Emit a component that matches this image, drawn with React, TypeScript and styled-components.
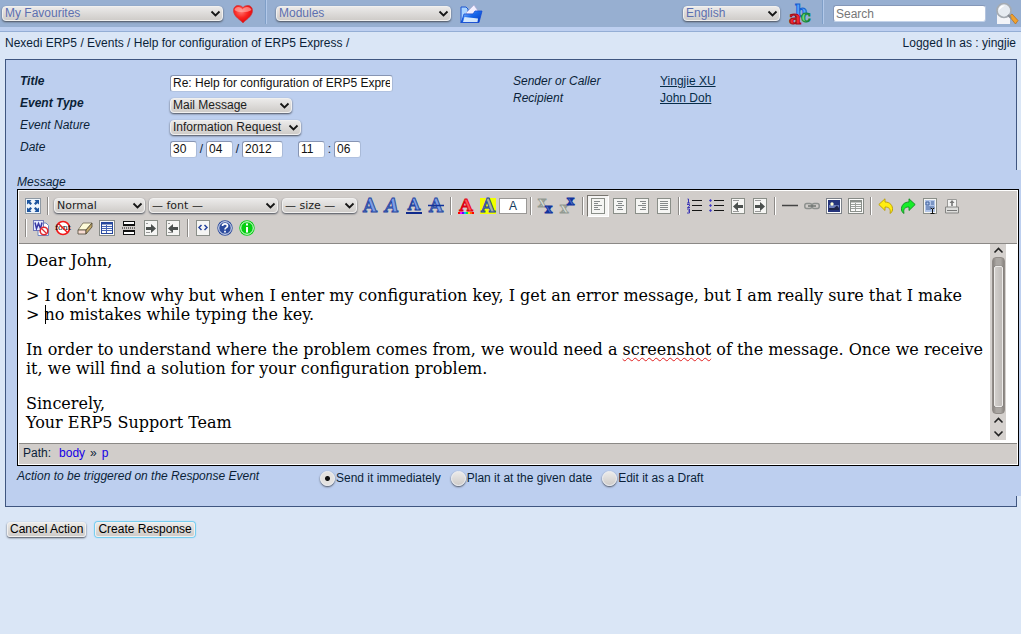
import React from 'react';
import styled, { createGlobalStyle, css } from 'styled-components';

const GlobalStyle = createGlobalStyle`
  *, *::before, *::after { box-sizing: border-box; }
  body {
    margin: 0;
    background: #dae6f6;
    color: #0b1f38;
    font: 12px/16px 'Liberation Sans', Arial, sans-serif;
    overflow-x: hidden;
  }
  p { margin: 0; }
  svg { display: block; flex: none; overflow: visible; }
`;

const raised = css`
  background: linear-gradient(#ebeae9, #cfccc9);
  border: 1px solid #f1f0ef;
  box-shadow: 0 1px 2px #4a4f5a;
`;

/* ---------- header ---------- */
const Header = styled.header`
  display: flex;
  align-items: center;
  height: 32px;
  padding: 0 2px 5px;
  background: linear-gradient(#97afd1 27px, #bdcff0 27px, #bdcff0 31px, #94aed5 31px);
`;
const Spacer = styled.div`flex: 1;`;
const HeaderLine = styled.span`
  width: 2px;
  height: 24px;
  margin: 0 9px 3px 11px;
  background: #b3c9ea;
  border-left: 1px solid #7f9fc8;
`;
const IconButton = styled.button`
  display: flex;
  padding: 0;
  margin-left: 9px;
  border: 0;
  background: none;
`;
const SearchInput = styled.input`
  width: 153px;
  height: 17px;
  padding: 0 2px;
  border: 1px solid #8497b8;
  border-right-color: #b4c4de;
  border-bottom-color: #c4d3ea;
  border-radius: 3px;
  font: 12px 'Liberation Sans', Arial, sans-serif;
  &::placeholder { color: #777; opacity: 1; }
`;

/* ---------- select ---------- */
const SelectBox = styled.span`
  position: relative;
  display: inline-flex;
  justify-self: start;
`;
const NativeSelect = styled.select<{ $width: number; $small?: boolean; $tint?: boolean }>`
  ${raised}
  appearance: none;
  width: ${p => p.$width}px;
  height: 15px;
  padding: 0 2px;
  border-radius: 4px;
  color: ${p => (p.$tint ? '#5d70b0' : '#1c1c1c')};
  font: ${p => (p.$small ? "11px/13px 'DejaVu Sans'" : "12px/13px 'Liberation Sans', Arial")}, sans-serif;
`;
const Arrow = styled.svg`
  position: absolute;
  top: 4px;
  right: 3px;
  pointer-events: none;
`;

type SelectProps = { label: string; options: string[]; width: number; small?: boolean; tint?: boolean; id?: string };
const Select = ({ label, options, width, small, tint, id }: SelectProps) => (
  <SelectBox>
    <NativeSelect id={id} aria-label={label} $width={width} $small={small} $tint={tint}>
      {options.map(o => <option key={o}>{o}</option>)}
    </NativeSelect>
    <Arrow width="9" height="8" viewBox="0 0 9 8">
      <path d="M.5 1.500l4 4l4-4" fill="none" stroke="#151515" strokeWidth="1.800" />
    </Arrow>
  </SelectBox>
);

/* ---------- page ---------- */
const Crumbs = styled.nav`
  display: flex;
  justify-content: space-between;
  padding: 3px 5px 8px;
  a { color: inherit; text-decoration: none; }
`;
const Panel = styled.section`
  margin: 0 4px 0 5px;
  padding-bottom: 10px;
  border: 1px solid #3f5680;
  background: #bdcfef;
`;
const Fields = styled.div`
  display: grid;
  grid-template-columns: 1fr 1fr;
  padding: 12px 0 10px;
`;
const Column = styled.div`padding-left: 14px;`;
const InfoColumn = styled.div`padding: 1px 0 0 2px;`;
const Row = styled.div`
  display: grid;
  grid-template-columns: 150px 1fr;
  align-items: center;
  height: 22px;
`;
const InfoRow = styled.div`
  display: grid;
  grid-template-columns: 147px 1fr;
  height: 17px;
  a { color: #062c48; text-decoration: underline; }
`;
const Label = styled.label<{ $strong?: boolean }>`
  padding-bottom: 5px;
  font-style: italic;
  font-weight: ${p => (p.$strong ? 'bold' : 'normal')};
`;
const Caption = styled.span`font-style: italic;`;
const TextInput = styled.input<{ $width: number }>`
  width: ${p => p.$width}px;
  height: 17px;
  padding: 0 2px;
  border: 1px solid #8795b3;
  border-right-color: #a9bad8;
  border-bottom-color: #b1c2e0;
  border-radius: 3px;
  background: #fff;
  color: #111;
  font: 12px 'Liberation Sans', Arial, sans-serif;
`;
const DateFields = styled.div`display: flex; align-items: center;`;
const Mark = styled.span<{ $width?: number }>`
  width: ${p => p.$width ?? 9}px;
  text-align: center;
`;

/* ---------- editor ---------- */
const Wide = styled.div`
  margin-right: -5px;
  padding: 4px 2px 10px 11px;
  background: #bdcfef;
`;
const MessageLabel = styled.div`
  height: 15px;
  font-style: italic;
`;
const Editor = styled.div`
  border: 1px solid #000;
  background: #fff;
`;
const Toolbar = styled.div`
  padding: 4px 3px;
  margin: 1px 1px 0;
  border-bottom: 1px solid #8b8986;
  background: #d1cdca;
`;
const ToolRow = styled.div`
  display: flex;
  align-items: center;
  height: 22px;
`;
const Tool = styled.button<{ $pressed?: boolean }>`
  display: flex;
  align-items: center;
  justify-content: center;
  width: 22px;
  height: 22px;
  padding: 0;
  border: 1px solid transparent;
  background: none;
  ${p => p.$pressed && css`
    background: #f6f5f4;
    border-color: #77746f #fff #fff #77746f;
  `}
`;
const FontSample = styled.button`
  width: 28px;
  height: 16px;
  padding: 0;
  border: 1px solid #9a9896;
  background: #fff;
  color: #143a5c;
  font: 12px/13px 'Liberation Sans', Arial, sans-serif;
`;
const Divider = styled.span`
  width: 2px;
  height: 18px;
  margin: 0 3px;
  border-left: 1px solid #8d8a87;
  background: #fff;
`;
const ToolSelects = styled.div`display: flex; gap: 4px; padding: 0 2px 1px;`;
const Sheet = styled.div`
  display: flex;
  align-items: flex-start;
  padding: 0 12px 3px 0;
`;
const Body = styled.div`
  flex: 1;
  padding: 7px 4px 0 8px;
  color: #000;
  font: 16px/19px 'DejaVu Serif', serif;
  outline: 0;
  p + p { margin-top: 16px; }
`;
const Misspelt = styled.span`
  text-decoration: underline wavy #e02020 1px;
  text-underline-offset: 2px;
  text-decoration-skip-ink: none;
`;
const CaretHost = styled.span`position: relative;`;
const Caret = styled.span`
  position: absolute;
  left: 0;
  top: 0;
  width: 1px;
  height: 19px;
  background: #000;
`;
const Scrollbar = styled.div`
  display: flex;
  flex-direction: column;
  align-items: center;
  align-self: stretch;
  width: 16px;
  min-height: 196px;
  background: #d5d1ce;
`;
const ScrollButton = styled.button`
  display: flex;
  align-items: center;
  justify-content: center;
  width: 16px;
  height: 13px;
  padding: 0;
  border: 0;
  background: none;
`;
const Track = styled.div`
  flex: 1;
  width: 13px;
  padding: 8px 1px 6px;
  border: 1px solid #918c88;
  border-radius: 4px;
  background: linear-gradient(90deg, #8a8581, #aaa6a2 30%, #aaa6a2 70%, #8a8581);
`;
const Thumb = styled.div`
  height: 100%;
  border: 1px solid #eeecea;
  border-radius: 2px;
  background: linear-gradient(90deg, #d2cfcc, #bfbbb8);
  box-shadow: 0 0 1px #444;
`;
const PathBar = styled.div`
  display: flex;
  gap: 5px;
  height: 21px;
  margin: 0 1px 1px;
  padding: 1px 4px;
  border-top: 1px solid #8b8986;
  background: #d1cdca;
  a { color: #1400e6; text-decoration: none; }
`;
const PathLabel = styled.span`margin-right: 3px;`;
const Actions = styled.fieldset`
  display: grid;
  grid-template-columns: 303px 1fr;
  margin: 0;
  padding: 2px 0 0;
  border: 0;
`;
const Choices = styled.div`
  display: flex;
  gap: 10px;
  padding-top: 2px;
`;
const Choice = styled.label`
  display: flex;
  gap: 1px;
`;
const Radio = styled.input`
  ${raised}
  appearance: none;
  width: 15px;
  height: 15px;
  margin: 1px 0 0;
  border-radius: 50%;
  &:checked { background: radial-gradient(circle, #111 2px, #e4e2e0 3px); }
`;
const Footer = styled.footer`
  display: flex;
  gap: 9px;
  padding: 15px 7px;
`;
const PushButton = styled.button<{ $focus?: boolean }>`
  ${raised}
  height: 15px;
  padding: 0 2px;
  border-radius: 3px;
  color: #000;
  font: 12px/13px 'Liberation Sans', Arial, sans-serif;
  ${p => p.$focus && css`box-shadow: 0 0 1px 1px #6ccbf0;`}
`;

/* ---------- drawings ---------- */
const Svg = ({ children, w = 16, h = 16 }: { children: React.ReactNode; w?: number; h?: number }) => (
  <svg width={w} height={h} viewBox={`0 0 ${w} ${h}`}>{children}</svg>
);
const serif = "'DejaVu Serif', serif";
const Letter = ({ fill = '#7d9fe6', stroke = '#24449f', slant, y = 14, size = 18 }: { fill?: string; stroke?: string; slant?: boolean; y?: number; size?: number }) => (
  <text x="8" y={y} textAnchor="middle" fontFamily={serif} fontWeight="bold" fontStyle={slant ? 'italic' : 'normal'}
    fontSize={size} fill={fill} stroke={stroke} strokeWidth=".9">A</text>
);
const Sheet16 = ({ children }: { children?: React.ReactNode }) => (
  <Svg><rect x="1.500" y=".5" width="13" height="15" fill="#f5f5f3" stroke="#8a8e88" />{children}</Svg>
);
const Lines = ({ spans }: { spans: [number, number][] }) => (
  <path d={spans.map(([a, b], i) => `M${a} ${3.5 + i * 2}H${b}`).join('')} stroke="#85898a" fill="none" />
);

const Heart = () => (
  <Svg w={22} h={20}>
    <defs><radialGradient id="heart" cx=".4" cy=".35" r=".7"><stop offset="0" stopColor="#ff7770" /><stop offset=".5" stopColor="#fa2420" /><stop offset="1" stopColor="#d90008" /></radialGradient></defs>
    <path d="M11 19C9 16 1.500 13 1.500 6.500C1.500 3.500 3.500 1.500 6 1.500C8.500 1.500 10.300 2.500 11 3.500C11.700 2.500 13.500 1.500 16 1.500C18.500 1.500 20.500 3.500 20.500 6.500C20.500 13 13 16 11 19Z" fill="url(#heart)" stroke="#c8383c" strokeWidth=".7" />
    <path d="M2.500 6C3 2 9 2 10.500 5.500C12 2 18.500 2 19.500 6C15 9 6 9 2.500 6Z" fill="#ffb9b4" opacity=".6" />
  </Svg>
);
const Folder = () => (
  <Svg w={23} h={20}>
    <defs><linearGradient id="folder" x2="1" y2="1"><stop stopColor="#b8dcff" /><stop offset=".45" stopColor="#1768ec" /><stop offset="1" stopColor="#0836bd" /></linearGradient></defs>
    <path d="M1 19V3H6L8 5V9L4 12Z" fill="#a9d3ff" stroke="#1a55cf" />
    <path d="M6 9L14 1L18 7L17 10H7Z" fill="#f3efff" stroke="#a8a5d0" strokeWidth=".6" />
    <path d="M4 10H13L15 7H22L19 18.500H1.500Z" fill="url(#folder)" stroke="#1149d2" strokeWidth=".8" />
    <path d="M4.500 13L18 14.500L17.500 18H3Z" fill="#e7f5ff" opacity=".9" />
  </Svg>
);
const Abc = () => (
  <Svg w={22} h={22}>
    <g fontFamily={serif} fontWeight="bold">
      <text x="6" y="14" fontSize="17" fill="#58a5ff" stroke="#1660cf" strokeWidth="1">b</text>
      <text x="0" y="21" fontSize="19" fill="#f32a32" stroke="#a90d18" strokeWidth="1">a</text>
      <text x="12" y="19" fontSize="16" fill="#6edc78" stroke="#14863a" strokeWidth="1">c</text>
    </g>
  </Svg>
);
const SearchIcon = () => (
  <Svg w={24} h={23}>
    <path d="M2 8H15V22H2Z" fill="#f3f4f8" />
    <path d="M14 14L17 12L23 18.500L20.500 22Z" fill="#f0a12c" stroke="#b86a14" strokeWidth=".7" />
    <circle cx="9" cy="8.500" r="7" fill="#e6ebf1" stroke="#a5abb2" strokeWidth="1.700" />
    <path d="M4 8C4 4 7 3 10 3.500C8 5 6 6 4 8Z" fill="#fff" />
    <path d="M13 13L16 16" stroke="#858a92" strokeWidth="2" />
  </Svg>
);
const Fullscreen = () => (
  <Svg>
    <rect x=".5" y=".5" width="15" height="15" fill="#eef5fc" stroke="#8d98a3" />
    <path d="M2 2H6.500L5.200 3.500L7 5.500L5.500 7L3.500 5.200L2 6.500ZM14 2V6.500L12.500 5.200L10.500 7L9 5.500L10.800 3.500L9.500 2ZM2 14V9.500L3.500 10.800L5.500 9L7 10.500L5.200 12.500L6.500 14ZM14 14H9.500L10.800 12.500L9 10.500L10.500 9L12.500 10.800L14 9.500Z" fill="#1d559f" />
  </Svg>
);
const Strike = () => <Svg><Letter /><path d="M0 7.500H16" stroke="#12329a" strokeWidth="1.500" /></Svg>;
const Underline = () => <Svg><Letter y={12} size={16} /><path d="M0 15H16" stroke="#102a8c" strokeWidth="2" /></Svg>;
const TextColor = () => (
  <Svg><Letter fill="#ff5555" stroke="#df0010" y={13} size={17} />
    {['#f00', '#f0f', '#60f', '#0bf', '#0e4', '#fd0', '#f60', '#f00'].map((c, i) => <rect key={i} x={i * 2} y="14" width="2" height="2" fill={c} />)}
  </Svg>
);
const Highlight = () => <Svg><rect width="16" height="16" fill="#f3ff00" /><Letter fill="#a9b4a0" /></Svg>;
const Script = ({ up }: { up?: boolean }) => (
  <Svg>
    <g fontFamily={serif} fontWeight="bold">
      <text x="0" y={up ? 15 : 9} fontSize="14" fill="#d9ddd7" stroke="#929a92" strokeWidth=".8">x</text>
      <text x="7" y={up ? 7 : 15} fontSize="12" fill="#5878d4" stroke="#14349c" strokeWidth="1">x</text>
    </g>
  </Svg>
);
const List = ({ numbered }: { numbered?: boolean }) => (
  <Svg>
    <path d="M6 2.500H16M6 7.500H16M6 12.500H16" stroke="#151515" />
    {numbered
      ? <path d="M1.500 1H2.500V5M1 5H4M1 6.500H3.500V8L1.500 9.500H4M1 11H3.500V15H1M2 13H3.500" stroke="#3b35b5" fill="none" />
      : <path d="M2.500 1L4 2.500L2.500 4L1 2.500ZM2.500 6L4 7.500L2.500 9L1 7.500ZM2.500 11L4 12.500L2.500 14L1 12.500Z" fill="#3b35c5" />}
  </Svg>
);
const Shift = ({ left, mid }: { left?: boolean; mid?: boolean }) => (
  <Sheet16>
    <path d={mid ? 'M3 3.500H5M3 12.500H7' : 'M3 2.500H9M3 13.500H9'} stroke="#999" />
    <path d={left ? 'M3 8.500L8 4V7H13V10H8V13Z' : 'M13 8.500L8 4V7H3V10H8V13Z'} fill="#4b504e" />
  </Sheet16>
);
const Rule = () => <Svg><path d="M0 7.500H16" stroke="#444" strokeWidth="1.500" /></Svg>;
const Chain = () => (
  <Svg><g fill="none" stroke="#8d918e" strokeWidth="1.500"><rect x=".8" y="5.500" width="7" height="5" rx="2" /><rect x="8.200" y="5.500" width="7" height="5" rx="2" /></g><path d="M4 8H12" stroke="#6f7471" strokeWidth="1.500" /></Svg>
);
const Picture = () => (
  <Svg>
    <rect x=".5" y=".5" width="15" height="15" fill="#fff" stroke="#7c8188" />
    <rect x="2" y="2" width="12" height="12" fill="#26357c" />
    <path d="M3 7H13V10H3Z" fill="#6c7dba" /><circle cx="6" cy="6" r="1.700" fill="#ffffd5" />
    <path d="M3 10H8L11 7.500L13 10V12H3Z" fill="#20264a" />
  </Svg>
);
const Grid = ({ blue }: { blue?: boolean }) => (
  <Svg>
    <rect x=".5" y=".5" width="15" height="15" fill="#fbfbfa" stroke="#868a86" />
    <rect x="2.500" y="2.500" width="11" height="11" fill="none" stroke={blue ? '#26469b' : '#8b908b'} />
    <path d="M3 3.500H13" stroke={blue ? '#26469b' : '#8b908b'} strokeWidth="2" />
    <path d="M3 6.500H13M3 8.500H13M3 10.500H13M7.500 5V13" stroke={blue ? '#4665b5' : '#9ba09b'} />
  </Svg>
);
const Turn = ({ redo }: { redo?: boolean }) => (
  <Svg><g transform={redo ? 'translate(16 0) scale(-1 1)' : undefined}>
    <path d="M.8 6.500L7 .8V4C12 4 15 7.500 14.500 12C14 14 13 15 12 15.500C13 11 11 9 7 9V12.500Z" fill={redo ? '#16ed28' : '#ffed10'} stroke={redo ? '#128a21' : '#b79a08'} strokeWidth=".9" />
  </g></Svg>
);
const SelectAll = () => (
  <Sheet16>
    <rect x="3" y="2" width="10" height="12" fill="#b3c6e8" />
    <path d="M4 4H7V7H4ZM9 4H12M9 6H12M4 9H12M4 11H9" stroke="#40629f" fill="none" />
    <path d="M8.500 10L10.500 11L12.500 10M10.500 11V15M8.500 15.500H12.500" stroke="#111" fill="none" />
  </Sheet16>
);
const Printer = () => (
  <Svg>
    <path d="M3.500 9V1.500H12.500V9" fill="#f3f3f2" stroke="#9a9a98" />
    <path d="M1.500 9H14.500V15H1.500Z" fill="#dededc" stroke="#858583" />
    <path d="M8 2L10.500 5H8.800V8H7.200V5H5.500Z" fill="#777" /><path d="M3 12.500H13" stroke="#777" />
  </Svg>
);
const Word = () => (
  <Svg>
    <path d="M5 3H13L15.500 5.500V15.500H5Z" fill="#fff" stroke="#6d86c0" />
    <rect x=".5" y=".5" width="10" height="10" fill="#e5ebff" stroke="#7078b8" />
    <path d="M2 2.500L3.500 8.500L5.500 3.500L7.500 8.500L9 2.500" stroke="#3838a4" strokeWidth="1.500" fill="none" />
    <circle cx="11" cy="11" r="3.800" fill="#fff" stroke="#e02a30" strokeWidth="1.600" /><path d="M8.500 8.500L13.500 13.500" stroke="#e02a30" strokeWidth="1.300" />
  </Svg>
);
const NoFont = () => (
  <Svg>
    <circle cx="8" cy="8" r="6.500" fill="#fff" stroke="#f01818" strokeWidth="1.600" />
    <text x="8" y="10" textAnchor="middle" fontFamily={serif} fontSize="8" fill="#111">font</text>
    <path d="M3.500 3.500L12.500 12.500" stroke="#f01818" strokeWidth="1.400" />
  </Svg>
);
const Eraser = () => (
  <Svg>
    <path d="M6 3H15L9 10H1Z" fill="#fdfbd8" stroke="#6d6650" strokeWidth=".8" />
    <path d="M1 10H9V14H1Z" fill="#f8dcd2" stroke="#4f4635" strokeWidth=".8" />
    <path d="M9 10L15 3V7L9 14Z" fill="#c4aa68" stroke="#4f4635" strokeWidth=".8" />
  </Svg>
);
const PageBreak = () => (
  <Svg>
    <path d="M3 1H13V5H3ZM3 11H13V15H3Z" fill="#fff" />
    <path d="M2.500 1V5M13.500 1V5M2.500 11V15M13.500 11V15" stroke="#111" />
    <path d="M2 5H14M2 11H14" stroke="#111" strokeWidth="2" />
    <path d="M1 8H15" stroke="#111" strokeDasharray="1 1" />
    <path d="M2 1.500H14M2 14.500H14" stroke="#111" />
  </Svg>
);
const Code = () => <Sheet16><path d="M6.500 5L4 7.500L6.500 10M9.500 5L12 7.500L9.500 10" fill="none" stroke="#25439d" strokeWidth="1.500" /></Sheet16>;
const Badge = ({ fill, info }: { fill: string; info?: boolean }) => (
  <Svg>
    <circle cx="8" cy="8" r="7.700" fill={fill} /><circle cx="8" cy="8" r="6.300" fill="none" stroke="#fff" strokeWidth=".9" />
    {info
      ? <path d="M8 3.500V5.500M8 7V12.500" stroke="#fff" strokeWidth="2" fill="none" />
      : <path d="M5.500 6C5.500 3.200 10.500 3.200 10.500 6C10.500 7.700 8 7.500 8 9.500M8 10.800V12.500" stroke="#fff" strokeWidth="1.700" fill="none" />}
  </Svg>
);
const Chevron = ({ down }: { down?: boolean }) => (
  <Svg w={9} h={7}><path d={down ? 'M.5 1.500L4.500 5.500L8.500 1.500' : 'M.5 5.500L4.500 1.500L8.500 5.500'} fill="none" stroke="#222" strokeWidth="1.600" /></Svg>
);

type ToolDef = [string, React.ReactNode, boolean?];
const Tools = ({ items }: { items: ToolDef[] }) => (
  <>{items.map(([name, icon, pressed]) => <Tool key={name} type="button" aria-label={name} $pressed={pressed}>{icon}</Tool>)}</>
);

const textTools: ToolDef[] = [['Bold', <Svg><Letter /></Svg>], ['Italic', <Svg><Letter slant /></Svg>], ['Underline', <Underline />], ['Strikethrough', <Strike />]];
const colorTools: ToolDef[] = [['Font color', <TextColor />], ['Background color', <Highlight />]];
const scriptTools: ToolDef[] = [['Subscript', <Script />], ['Superscript', <Script up />]];
const alignTools: ToolDef[] = [
  ['Justify left', <Sheet16><Lines spans={[[4, 10], [4, 8], [4, 12], [4, 8], [4, 10]]} /></Sheet16>, true],
  ['Justify center', <Sheet16><Lines spans={[[5, 11], [6, 10], [4, 12], [6, 10], [5, 11]]} /></Sheet16>],
  ['Justify right', <Sheet16><Lines spans={[[6, 12], [8, 12], [4, 12], [8, 12], [6, 12]]} /></Sheet16>],
  ['Justify full', <Sheet16><Lines spans={[[4, 12], [4, 12], [4, 12], [4, 12], [4, 12]]} /></Sheet16>],
];
const listTools: ToolDef[] = [['Ordered list', <List numbered />], ['Bulleted list', <List />], ['Decrease indent', <Shift left />], ['Increase indent', <Shift />]];
const insertTools: ToolDef[] = [['Horizontal rule', <Rule />], ['Insert link', <Chain />], ['Insert image', <Picture />], ['Insert table', <Grid />]];
const historyTools: ToolDef[] = [['Undo', <Turn />], ['Redo', <Turn redo />], ['Select all', <SelectAll />], ['Print', <Printer />]];
const cleanTools: ToolDef[] = [
  ['Clean Word markup', <Word />], ['Clear fonts', <NoFont />], ['Remove formatting', <Eraser />], ['Toggle borders', <Grid blue />],
  ['Page break', <PageBreak />], ['Left to right', <Shift mid />], ['Right to left', <Shift left mid />],
];
const helpTools: ToolDef[] = [['HTML source', <Code />], ['Help', <Badge fill="#2d4c9e" />], ['About', <Badge fill="#05cf12" info />]];

export default function App() {
  return (
    <>
      <GlobalStyle />
      <Header>
        <Select label="My Favourites" options={['My Favourites']} width={221} tint />
        <IconButton type="button" aria-label="Open favourite"><Heart /></IconButton>
        <HeaderLine />
        <Select label="Modules" options={['Modules']} width={175} tint />
        <IconButton type="button" aria-label="Open module"><Folder /></IconButton>
        <Spacer />
        <Select label="Language" options={['English']} width={97} tint />
        <IconButton type="button" aria-label="Change language"><Abc /></IconButton>
        <HeaderLine />
        <SearchInput aria-label="Search" placeholder="Search" />
        <IconButton type="button" aria-label="Run search"><SearchIcon /></IconButton>
      </Header>
      <Crumbs aria-label="Breadcrumb">
        <span><a href="#erp5">Nexedi ERP5</a> / <a href="#events">Events</a> / <a href="#help">Help for configuration of ERP5 Express</a> /</span>
        <span>Logged In as : yingjie</span>
      </Crumbs>
      <main>
        <Panel>
          <Fields>
            <Column>
              <Row><Label htmlFor="title" $strong>Title</Label><TextInput id="title" $width={223} defaultValue="Re: Help for configuration of ERP5 Express" /></Row>
              <Row><Label htmlFor="type" $strong>Event Type</Label><Select id="type" label="Event Type" options={['Mail Message']} width={122} /></Row>
              <Row><Label htmlFor="nature">Event Nature</Label><Select id="nature" label="Event Nature" options={['Information Request']} width={131} /></Row>
              <Row>
                <Label htmlFor="day">Date</Label>
                <DateFields>
                  <TextInput id="day" $width={27} defaultValue="30" /><Mark>/</Mark>
                  <TextInput aria-label="Month" $width={27} defaultValue="04" /><Mark>/</Mark>
                  <TextInput aria-label="Year" $width={41} defaultValue="2012" /><Mark $width={15} />
                  <TextInput aria-label="Hour" $width={27} defaultValue="11" /><Mark>:</Mark>
                  <TextInput aria-label="Minute" $width={27} defaultValue="06" />
                </DateFields>
              </Row>
            </Column>
            <InfoColumn>
              <InfoRow><Caption>Sender or Caller</Caption><a href="#sender">Yingjie XU</a></InfoRow>
              <InfoRow><Caption>Recipient</Caption><a href="#recipient">John Doh</a></InfoRow>
            </InfoColumn>
          </Fields>
          <Wide>
            <MessageLabel id="message">Message</MessageLabel>
            <Editor>
              <Toolbar role="toolbar" aria-label="Formatting">
                <ToolRow>
                  <Tools items={[['Full screen', <Fullscreen />]]} />
                  <Divider />
                  <ToolSelects>
                    <Select label="Format" options={['Normal']} width={91} small />
                    <Select label="Font" options={['— font —']} width={129} small />
                    <Select label="Size" options={['— size —']} width={75} small />
                  </ToolSelects>
                  <Tools items={textTools} />
                  <Divider />
                  <Tools items={colorTools} />
                  <FontSample type="button">A</FontSample>
                  <Divider />
                  <Tools items={scriptTools} />
                  <Divider />
                  <Tools items={alignTools} />
                  <Divider />
                  <Tools items={listTools} />
                  <Divider />
                  <Tools items={insertTools} />
                  <Divider />
                  <Tools items={historyTools} />
                </ToolRow>
                <ToolRow>
                  <Divider />
                  <Tools items={cleanTools} />
                  <Divider />
                  <Tools items={helpTools} />
                </ToolRow>
              </Toolbar>
              <Sheet>
                <Body role="textbox" aria-multiline="true" aria-labelledby="message" contentEditable suppressContentEditableWarning spellCheck={false}>
                  <p>Dear John,</p>
                  <p>&gt; I don't know why but when I enter my configuration key, I get an error message, but I am really sure that I make<br />&gt; <CaretHost><Caret />no</CaretHost> mistakes while typing the key.</p>
                  <p>In order to understand where the problem comes from, we would need a <Misspelt>screenshot</Misspelt> of the message. Once we receive it, we will find a solution for your configuration problem.</p>
                  <p>Sincerely,<br />Your ERP5 Support Team</p>
                </Body>
                <Scrollbar>
                  <ScrollButton type="button" aria-label="Scroll up"><Chevron /></ScrollButton>
                  <Track><Thumb /></Track>
                  <ScrollButton type="button" aria-label="Page up"><Chevron /></ScrollButton>
                  <ScrollButton type="button" aria-label="Scroll down"><Chevron down /></ScrollButton>
                </Scrollbar>
              </Sheet>
              <PathBar><PathLabel>Path:</PathLabel><a href="#body">body</a><span>»</span><a href="#p">p</a></PathBar>
            </Editor>
            <Actions aria-labelledby="action">
              <Caption id="action">Action to be triggered on the Response Event</Caption>
              <Choices>
                <Choice><Radio type="radio" name="action" defaultChecked />Send it immediately</Choice>
                <Choice><Radio type="radio" name="action" />Plan it at the given date</Choice>
                <Choice><Radio type="radio" name="action" />Edit it as a Draft</Choice>
              </Choices>
            </Actions>
          </Wide>
        </Panel>
      </main>
      <Footer>
        <PushButton type="button">Cancel Action</PushButton>
        <PushButton type="submit" $focus>Create Response</PushButton>
      </Footer>
    </>
  );
}
